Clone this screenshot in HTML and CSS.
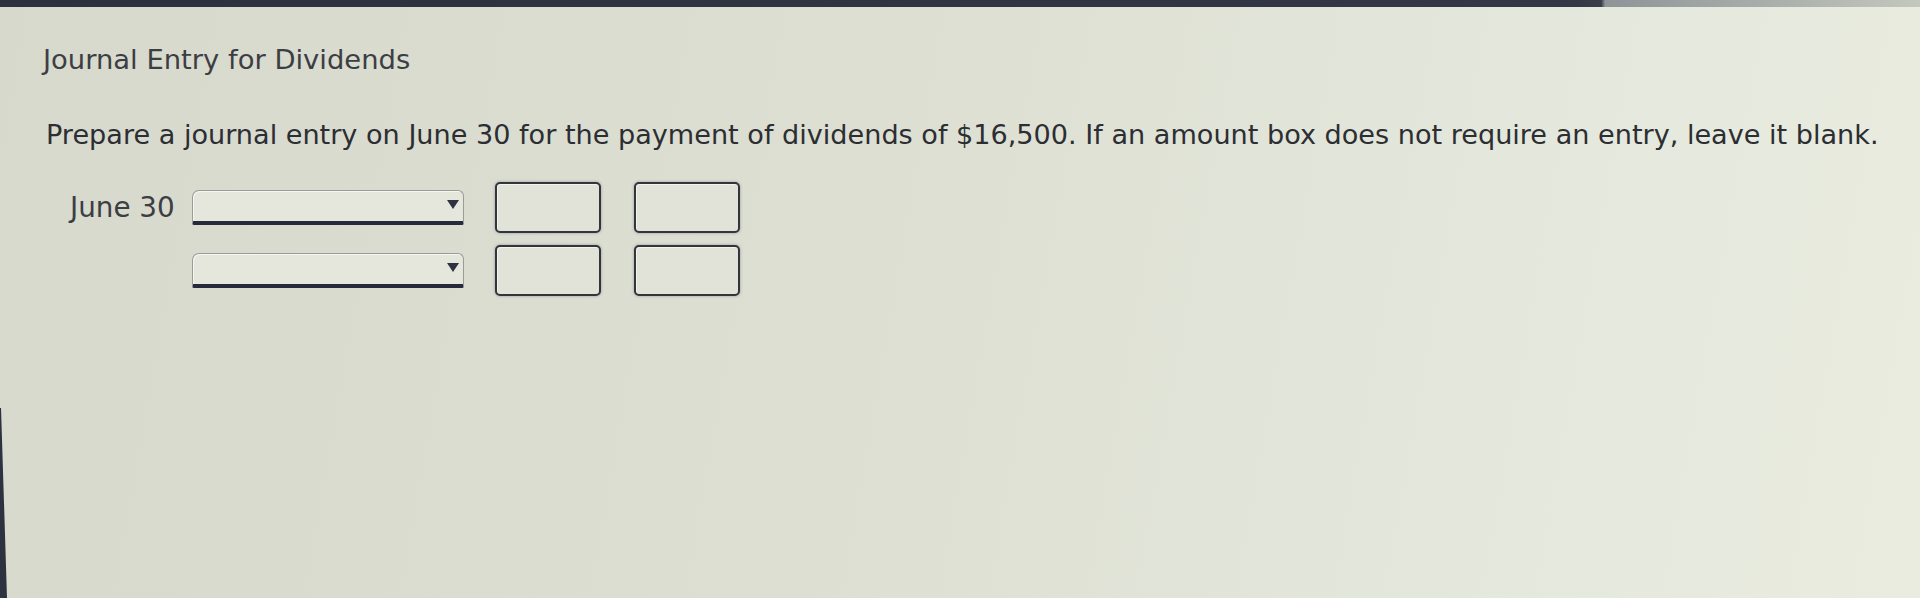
FILE: index.html
```html
<!DOCTYPE html>
<html lang="en">
<head>
<meta charset="utf-8">
<title>Journal Entry for Dividends</title>
<link rel="stylesheet" href="styles.css">
</head>
<body>
  <div class="topbar"></div>
  <main class="sheet">
    <h1 class="title">Journal Entry for Dividends</h1>
    <p class="prompt">Prepare a journal entry on June 30 for the payment of dividends of $16,500. If an amount box does not require an entry, leave it blank.</p>
    <div class="entry">
      <span class="date">June 30</span>
      <div class="account"><span class="caret"></span></div>
      <div class="amount"></div>
      <div class="amount"></div>

      <span class="date"></span>
      <div class="account"><span class="caret"></span></div>
      <div class="amount"></div>
      <div class="amount"></div>
    </div>
  </main>
</body>
</html>
```
FILE: styles.css
```css
html, body {
  margin: 0;
  height: 100%;
}

body {
  background: linear-gradient(100deg, #d6d9cc 0%, #dcdfd2 45%, #e5e8dc 80%, #e9ecdf 100%);
  font-family: "DejaVu Sans", Verdana, sans-serif;
  color: #34363a;
  overflow: hidden;
}

/* dark bezel edge along the lower left */
body::after {
  content: "";
  position: fixed;
  left: 0;
  bottom: 0;
  width: 7px;
  height: 190px;
  background: #2e3140;
  clip-path: polygon(0 0, 1px 0, 100% 100%, 0 100%);
}

.topbar {
  height: 7px;
  background: linear-gradient(90deg, #2d303d 0%, #343846 82%, #3a3e4a 83.4%, #8e9498 83.6%, #c4c7bd 100%);
}

.sheet {
  padding: 0 0 0 43px;
}

.title {
  margin: 37px 0 0;
  font-size: 27.4px;
  font-weight: normal;
  line-height: 32px;
  color: #3c3e44;
}

.prompt {
  margin: 43px 0 0 3px;
  font-size: 27.1px;
  line-height: 32px;
  color: #2c2e33;
}

.entry {
  display: grid;
  grid-template-columns: 118px 272px 108px 108px;
  grid-auto-rows: 51px;
  column-gap: 31px;
  row-gap: 12px;
  align-items: center;
  margin-top: 31px;
}

.date {
  padding-left: 27px;
  font-size: 27.8px;
  color: #3c3e44;
  white-space: nowrap;
}

.account {
  position: relative;
  height: 30px;
  background: #e5e7dd;
  border: 1px solid #9a9c98;
  border-bottom: 4px solid #262a3a;
  border-radius: 7px 6px 2px 2px;
  box-shadow: inset 1px 1px 0 #f6f7f1;
}

.caret {
  position: absolute;
  right: 4px;
  top: 9px;
  width: 0;
  height: 0;
  border-left: 6px solid transparent;
  border-right: 6px solid transparent;
  border-top: 9px solid #2f3240;
}

.amount {
  width: 106px;
  height: 51px;
  box-sizing: border-box;
  background: #e1e3d9;
  border: 2.5px solid #33353b;
  border-radius: 5px;
  box-shadow: 0 0 3px rgba(60, 70, 110, 0.45), inset 1px 1px 0 #f2f3ec;
}
```
